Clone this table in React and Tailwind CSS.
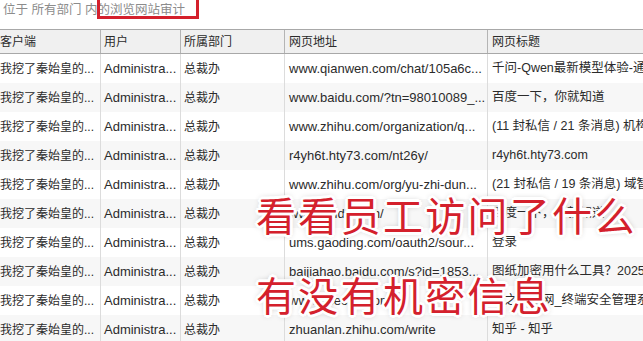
import React from 'react';

const rows = [
  ['www.qianwen.com/chat/105a6c...', '千问-Qwen最新模型体验-通义千问'],
  ['www.baidu.com/?tn=98010089_...', '百度一下，你就知道'],
  ['www.zhihu.com/organization/q...', '(11 封私信 / 21 条消息) 机构号 - 知乎'],
  ['r4yh6t.hty73.com/nt26y/', 'r4yh6t.hty73.com'],
  ['www.zhihu.com/org/yu-zhi-dun...', '(21 封私信 / 19 条消息) 域智盾 - 知乎'],
  ['www.baidu.com/', '百度一下，你就知道'],
  ['ums.gaoding.com/oauth2/sour...', '登录'],
  ['baijiahao.baidu.com/s?id=1853...', '图纸加密用什么工具？2025年最新'],
  ['www.dsecret.com/', '域之盾官网_终端安全管理系统'],
  ['zhuanlan.zhihu.com/write', '知乎 - 知乎'],
];

const shadow =
  '[text-shadow:3px_0_0_#fff,-3px_0_0_#fff,0_3px_0_#fff,0_-3px_0_#fff,2px_2px_0_#fff,-2px_-2px_0_#fff,2px_-2px_0_#fff,-2px_2px_0_#fff,0_0_6px_rgba(0,0,0,0.45)]';

export default function App() {
  return (
    <div className="relative w-[643px] h-[341px] overflow-hidden bg-white text-[13px] text-[#2b2b2b] font-['Liberation_Sans','Noto_Sans_CJK_SC',sans-serif]">
      {/* breadcrumb */}
      <div className="h-[29px] flex items-center pl-[3px] pb-[8px] text-[12.5px] text-[#8c8c8c] whitespace-nowrap">
        位于 所有部门 内的浏览网站审计
      </div>

      {/* header */}
      <div className="flex h-[25px] text-[12px] bg-[#f0f0f0] border-y border-[#a8a8a8] whitespace-nowrap">
        <div className="w-[101px] border-r border-[#b4b4b4] flex items-center">客户端</div>
        <div className="w-[80px] border-r border-[#b4b4b4] flex items-center pl-[3px]">用户</div>
        <div className="w-[104px] border-r border-[#b4b4b4] flex items-center pl-[3px]">所属部门</div>
        <div className="w-[203px] border-r border-[#b4b4b4] flex items-center pl-[4px]">网页地址</div>
        <div className="flex-1 flex items-center pl-[4px]">网页标题</div>
      </div>

      {/* body */}
      {rows.map(([url, title], i) => (
        <div key={i} className={`flex h-[29px] whitespace-nowrap ${i % 2 ? 'bg-[#f7f7f7]' : 'bg-white'}`}>
          <div className="w-[101px] border-r border-[#dcdcdc] flex items-center overflow-hidden text-[12px]">我挖了秦始皇的...</div>
          <div className="w-[80px] border-r border-[#dcdcdc] flex items-center pl-[3px] overflow-hidden">Administra...</div>
          <div className="w-[104px] border-r border-[#dcdcdc] flex items-center pl-[3px] text-[12px]">总裁办</div>
          <div className="w-[203px] border-r border-[#dcdcdc] flex items-center pl-[4px] overflow-hidden">{url}</div>
          <div className="flex-1 flex items-center pl-[4px] overflow-hidden text-[12.5px]">{title}</div>
        </div>
      ))}

      {/* highlight box */}
      <div className="absolute left-[97px] top-[-4px] w-[102px] h-[23px] border-[3px] border-[#d4202c]" />

      {/* caption overlay */}
      <div className={`absolute left-[256px] top-[194px] flex flex-col gap-[40px] text-[40px] leading-[40px] tracking-[2.3px] font-normal text-[#d4202c] whitespace-nowrap font-['Noto_Sans_CJK_SC',sans-serif] ${shadow}`}>
        <div>看看员工访问了什么</div>
        <div>有没有机密信息</div>
      </div>
    </div>
  );
}
